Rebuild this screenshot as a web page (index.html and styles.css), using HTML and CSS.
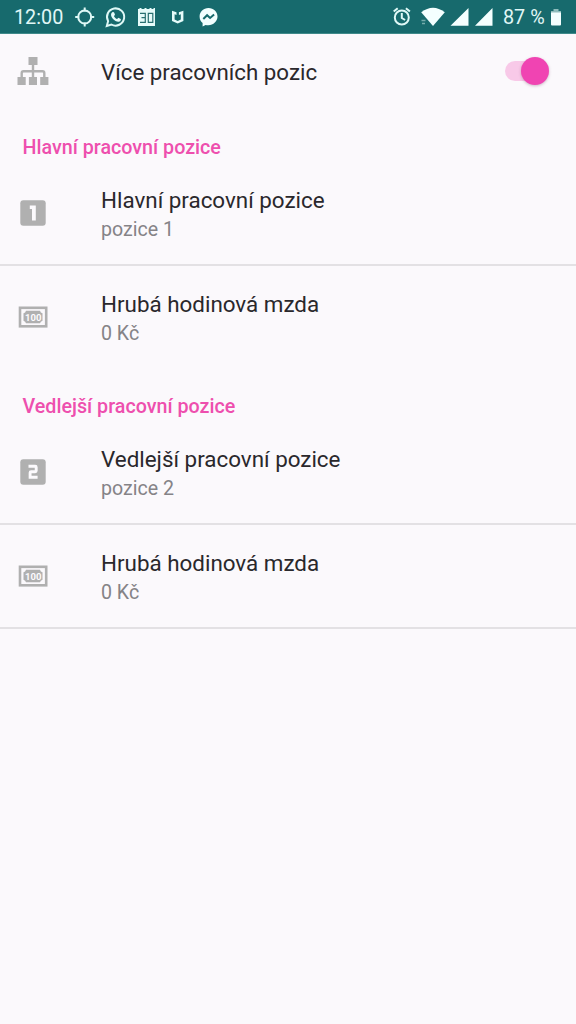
FILE: index.html
```html
<!DOCTYPE html>
<html lang="cs">
<head>
<meta charset="utf-8">
<title>Pracovní pozice</title>
<link rel="stylesheet" href="styles.css">
</head>
<body>
<header class="status">
  <span class="clock">12:00</span>
  <svg class="status-left" width="146" height="24" viewBox="74 5 146 24">
    <g fill="none" stroke="#dff8f6" stroke-width="2">
      <circle cx="84.7" cy="17" r="6.5"/>
      <path d="M84.7 7.5v4M84.7 22.500v4M75.200 17h4M90.200 17h4"/>
      <path d="M106.800 26l1.300-4.800a8.600 8.600 0 1 1 3.300 3.300z"/>
    </g>
    <path fill="#e6fbfa" d="M112.300 12.200c.6-.5 1.500-.4 1.800.3l.9 2.100-1 1.600c.8 1.400 1.800 2.300 3.100 2.900l1.300-1.400 2.300 1.200c.6.500-.1 2.200-1.200 2.700-3.800 1.300-9.200-4.200-8.400-7.500.2-.8.600-1.500 1.200-1.900z"/>
    <path fill="#e6fbfa" d="M138 9h1.500V8h2v1h3V8h2v1h3V8h2v1h2V8h1.500v18h-17z"/>
    <path fill="none" stroke="#286f71" stroke-width="1.200" d="M140 13.300h5.300v9h-5.300M141.500 17.600h3.800M148.300 13.300h4.500v9h-4.500z"/>
    <path fill="#e6fbfa" d="M172 10.800l4.500 1.500v2.600l-1.900-.7v5.200l3.100 1.500 3.100-1.500v-5.200l-1.900.7v-2.600l4.500-1.500v10.200l-5.700 2.500-5.700-2.500z"/>
    <path fill="#f2ffff" d="M208.500 8c-5.100 0-8.900 3.700-8.900 8.600 0 2.700 1.100 4.900 3 6.500v3.400l3-1.600c6.300 1.700 11.900-2.700 11.900-8.300 0-4.900-3.900-8.600-9-8.600z"/>
    <path fill="none" stroke="#176a6d" stroke-width="2" d="M203.300 19l3.800-3.800 3 2.800 4-3.400"/>
  </svg>
  <svg class="status-right" width="104" height="24" viewBox="391 5 104 24">
    <g fill="none" stroke="#dff8f6" stroke-width="2">
      <circle cx="401.800" cy="17.500" r="7"/>
      <path d="M401.800 13v5l3.300 2M393.700 11.600l4-3.300M409.900 11.600l-4-3.300"/>
    </g>
    <path fill="#f4ffff" d="M421.200 12.200q11.800-9 23.600 0L433 26z"/>
    <path fill="#f4ffff" d="M450.500 25.800h18V8zM475 25.800h17.500V8z"/>
    <path stroke="#75acac" stroke-width="1.500" d="M421.500 20.500h4M422 23.500h3"/>
  </svg>
  <span class="percent">87 %</span>
  <svg class="battery" width="12" height="20" viewBox="0 0 12 20">
    <path fill="#8ebcbc" d="M1 4h2.500V2h5v2H11v3H1z"/>
    <path fill="#f4ffff" d="M1 5.500h10v12q0 1-1 1H2q-1 0-1-1z"/>
  </svg>
</header>
<main>
  <label class="row row-switch">
    <span class="icon">
      <svg width="32" height="30" viewBox="0 0 32 30">
        <path fill="#b0b0b0" d="M11.500 1h9v8h-9zM.5 21h8.200v8H.5zM11.900 21H20v8h-8.100zM23.200 21h8.200v8h-8.200z"/>
        <path fill="none" stroke="#b0b0b0" stroke-width="2.400" d="M16 8v14M4.700 22v-5q0-1.800 1.800-1.800h19q1.800 0 1.800 1.800v5"/>
      </svg>
    </span>
    <span class="title">Více pracovních pozic</span>
    <span class="switch"><span class="thumb"></span></span>
  </label>

  <h2 class="heading">Hlavní pracovní pozice</h2>
  <section class="row">
    <span class="icon">
      <svg width="26" height="26" viewBox="0 0 26 26">
        <rect x=".3" y=".3" width="25.400" height="25.400" rx="3" fill="#b0b0b0"/>
        <path fill="#fcfafd" d="M9.800 5.500h6v15H12V9H9.800z"/>
      </svg>
    </span>
    <div class="copy"><div class="title">Hlavní pracovní pozice</div><div class="sub">pozice 1</div></div>
  </section>
  <section class="row">
    <span class="icon">
      <svg class="note" width="30" height="22" viewBox="0 0 30 22">
        <rect x="2" y="1.800" width="26.200" height="18.500" fill="none" stroke="#b0b0b0" stroke-width="2.600"/>
        <path fill="#b0b0b0" d="M8 4.800h14q.5 2 2.500 2.500v7.500q-2 .5-2.500 2.500H8q-.5-2-2.500-2.500V7.300q2-.5 2.500-2.500z"/>
        <text class="bill" x="15.200" y="14.500" text-anchor="middle">100</text>
      </svg>
    </span>
    <div class="copy"><div class="title">Hrubá hodinová mzda</div><div class="sub">0 Kč</div></div>
  </section>

  <h2 class="heading">Vedlejší pracovní pozice</h2>
  <section class="row">
    <span class="icon">
      <svg width="26" height="26" viewBox="0 0 26 26">
        <rect x=".3" y=".3" width="25.400" height="25.400" rx="3" fill="#b0b0b0"/>
        <path fill="none" stroke="#fcfafd" stroke-width="2.900" d="M8.500 7.200h6.700q1 0 1 1v3.500q0 1-1 1h-4.100q-1 0-1 1v4.500h7.500"/>
      </svg>
    </span>
    <div class="copy"><div class="title">Vedlejší pracovní pozice</div><div class="sub">pozice 2</div></div>
  </section>
  <section class="row">
    <span class="icon">
      <svg class="note" width="30" height="22" viewBox="0 0 30 22">
        <rect x="2" y="1.800" width="26.200" height="18.500" fill="none" stroke="#b0b0b0" stroke-width="2.600"/>
        <path fill="#b0b0b0" d="M8 4.800h14q.5 2 2.500 2.500v7.500q-2 .5-2.500 2.500H8q-.5-2-2.500-2.500V7.300q2-.5 2.500-2.500z"/>
        <text class="bill" x="15.200" y="14.500" text-anchor="middle">100</text>
      </svg>
    </span>
    <div class="copy"><div class="title">Hrubá hodinová mzda</div><div class="sub">0 Kč</div></div>
  </section>
</main>
</body>
</html>
```
FILE: styles.css
```css
* { box-sizing: border-box; }
body {
  margin: 0;
  min-height: 1024px;
  background: #fbf9fc;
  font-family: Roboto, "Noto Sans", sans-serif;
}
.status {
  display: flex;
  align-items: center;
  height: 34px;
  padding: 0 13px 0 14px;
  background: #176a6d;
  border-bottom: 1px solid #3f8a8a;
  color: #e0f7f6;
  font-size: 19.8px;
  line-height: 32px;
}
.clock { width: 60px; padding-top: 2px; }
.status-left { flex: none; }
.status-right { flex: none; margin-left: auto; }
.percent { width: 47px; margin-left: 8px; padding-top: 2px; white-space: nowrap; }
.battery { flex: none; margin-right: 1px; }
.row {
  display: flex;
  align-items: center;
  height: 104px;
  padding-right: 27px;
  border-bottom: 2px solid #e3e1e4;
}
.row:has(+ .heading) { border-bottom-color: transparent; }
.row-switch { height: 77px; padding-top: 1px; }
.icon {
  display: flex;
  justify-content: center;
  flex: none;
  width: 66px;
  margin-right: 35px;
}
.row-switch .icon,
.row-switch .switch { margin-bottom: 2px; }
.copy { padding-top: 3px; }
.title {
  color: #2a282c;
  font-size: 22.4px;
  line-height: 30px;
  white-space: nowrap;
}
.row-switch .title { font-size: 22.3px; }
.sub {
  color: #858387;
  font-size: 19.6px;
  line-height: 29px;
}
.heading {
  height: 51px;
  margin: 0;
  padding: 23px 0 0 22.5px;
  color: #ee4fae;
  font-size: 19.7px;
  font-weight: 500;
  line-height: 27px;
}
.switch {
  position: relative;
  width: 40px;
  height: 20px;
  margin-left: auto;
  margin-right: 4px;
  border-radius: 10px;
  background: #f8c9e8;
}
.thumb {
  position: absolute;
  right: -4px;
  top: -4px;
  width: 28px;
  height: 28px;
  border-radius: 50%;
  background: #f044b2;
  box-shadow: 0 1px 3px rgba(120, 60, 100, .35);
}
.bill {
  fill: #fcfafd;
  font-size: 9.500px;
  font-weight: 700;
}
```
